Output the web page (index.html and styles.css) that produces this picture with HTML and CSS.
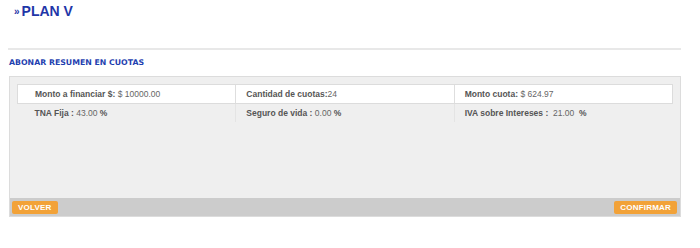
FILE: index.html
```html
<!DOCTYPE html>
<html lang="es">
<head>
    <meta charset="UTF-8">
    <title>Plan V</title>
    <link rel="stylesheet" href="styles.css">
</head>
<body>

<div class="page">
    <h1 class="titulo"><span class="flechas">&raquo;</span>PLAN V</h1>
    <div class="separador"></div>
    <h2 class="subtitulo">ABONAR RESUMEN EN CUOTAS</h2>

    <div class="panel">
        <div class="panel-body">
            <table class="resumen">
                <tr class="fila-principal">
                    <td class="primera"><b>Monto a financiar $:</b> $ 10000.00</td>
                    <td><b>Cantidad de cuotas:</b>24</td>
                    <td><b>Monto cuota:</b> $ 624.97</td>
                </tr>
                <tr class="fila-detalle">
                    <td class="primera"><b>TNA Fija :</b> 43.00 <b>%</b></td>
                    <td><b>Seguro de vida :</b> 0.00 <b>%</b></td>
                    <td><b>IVA sobre Intereses :</b> &nbsp;21.00 &nbsp;<b>%</b></td>
                </tr>
            </table>
        </div>
        <div class="panel-footer">
            <button class="boton">VOLVER</button>
            <button class="boton">CONFIRMAR</button>
        </div>
    </div>
</div>

</body>
</html>
```

FILE: styles.css
```css
body {
    margin: 0;
    font-family: "Liberation Sans", Arial, sans-serif;
    background: #fff;
}

.page {
    width: 673px;
    padding: 0 0 0 8px;
}

.titulo {
    margin: 0;
    padding: 3px 0 0 6px;
    font-size: 14px;
    line-height: 16px;
    color: #1f36a8;
}

.flechas {
    font-size: 10px;
    margin-right: 2px;
    position: relative;
    top: -1px;
}

.separador {
    height: 2px;
    background: #e8e8e8;
    margin-top: 27px;
}

.subtitulo {
    margin: 8px 0 0 1px;
    font-family: "DejaVu Sans", Verdana, sans-serif;
    font-size: 7.8px;
    line-height: 10px;
    color: #1f3fb0;
}

.panel {
    margin: 8px 0 0 1px;
    border: 1px solid #dcdcdc;
    background: #efefef;
}

.panel-body {
    height: 113px;
    padding: 7px 7px 1px 7px;
}

.resumen {
    width: 100%;
    border-collapse: collapse;
    font-size: 8.5px;
    color: #666;
}

.resumen td {
    width: 33.3%;
    padding: 0 0 0 10px;
    height: 18px;
    border-left: 1px solid #dedede;
}

.resumen td.primera {
    padding-left: 17px;
    border-left: none;
}

.resumen b {
    color: #555;
}

.fila-principal td {
    background: #fff;
    border-top: 1px solid #dcdcdc;
    border-bottom: 1px solid #dcdcdc;
}

.fila-principal td.primera {
    border-left: 1px solid #dcdcdc;
}

.fila-principal td:last-child {
    border-right: 1px solid #dcdcdc;
}

.fila-detalle td {
    border-left-color: #e4e4e4;
}

.panel-footer {
    display: flex;
    justify-content: space-between;
    align-items: center;
    height: 18px;
    padding: 0 3px 0 2px;
    background: #cccccc;
}

.boton {
    border: none;
    border-radius: 2px;
    background: #f2a238;
    color: #fff;
    font-family: "Liberation Sans", Arial, sans-serif;
    font-size: 8px;
    font-weight: bold;
    letter-spacing: 0.2px;
    height: 13px;
    line-height: 13px;
    padding: 0 6px;
}
```
